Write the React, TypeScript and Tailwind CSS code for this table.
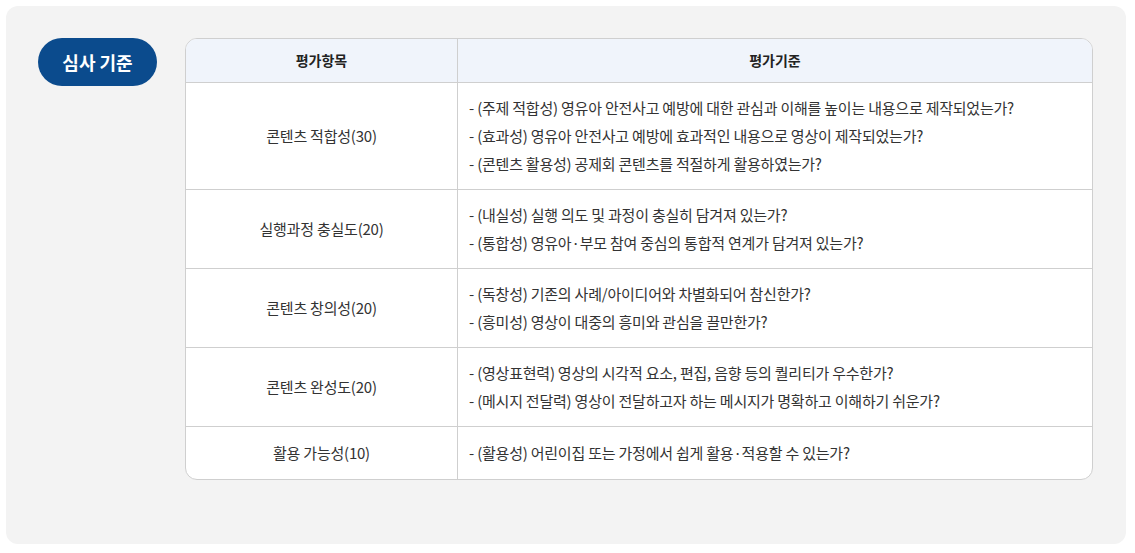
const rows = [
  {
    item: "콘텐츠 적합성(30)",
    criteria: [
      "- (주제 적합성) 영유아 안전사고 예방에 대한 관심과 이해를 높이는 내용으로 제작되었는가?",
      "- (효과성) 영유아 안전사고 예방에 효과적인 내용으로 영상이 제작되었는가?",
      "- (콘텐츠 활용성) 공제회 콘텐츠를 적절하게 활용하였는가?",
    ],
  },
  {
    item: "실행과정 충실도(20)",
    criteria: [
      "- (내실성) 실행 의도 및 과정이 충실히 담겨져 있는가?",
      "- (통합성) 영유아·부모 참여 중심의 통합적 연계가 담겨져 있는가?",
    ],
  },
  {
    item: "콘텐츠 창의성(20)",
    criteria: [
      "- (독창성) 기존의 사례/아이디어와 차별화되어 참신한가?",
      "- (흥미성) 영상이 대중의 흥미와 관심을 끌만한가?",
    ],
  },
  {
    item: "콘텐츠 완성도(20)",
    criteria: [
      "- (영상표현력) 영상의 시각적 요소, 편집, 음향 등의 퀄리티가 우수한가?",
      "- (메시지 전달력) 영상이 전달하고자 하는 메시지가 명확하고 이해하기 쉬운가?",
    ],
  },
  {
    item: "활용 가능성(10)",
    criteria: ["- (활용성) 어린이집 또는 가정에서 쉽게 활용·적용할 수 있는가?"],
  },
];

export default function App() {
  return (
    <div
      className="w-[1135px] h-[553px] bg-white p-[6px]"
      style={{ fontFamily: '"Noto Sans CJK KR", "Noto Sans", sans-serif' }}
    >
      <div className="w-[1120px] h-[538px] bg-[#f3f3f3] rounded-[12px] flex items-start gap-[28px] pl-[32px] pt-[32px]">
        {/* Badge */}
        <div className="w-[119px] h-[48px] rounded-full bg-[#0b4b8d] text-white flex items-center justify-center text-[18px] font-bold shrink-0">
          심사 기준
        </div>

        {/* Criteria table */}
        <div className="w-[908px] bg-white border border-[#cfcfcf] rounded-[12px] overflow-hidden text-[#333] text-[15px] tracking-[-0.22px]">
          <div className="flex h-[44px] bg-[#f0f4fb] border-b border-[#cfcfcf] font-bold text-[#222] text-[14px] tracking-normal">
            <div className="w-[272px] border-r border-[#cfcfcf] flex items-center justify-center">평가항목</div>
            <div className="flex-1 flex items-center justify-center">평가기준</div>
          </div>
          {rows.map((row, i) => (
            <div key={i} className={`flex ${i > 0 ? "border-t border-[#cfcfcf]" : ""}`}>
              <div className="w-[272px] border-r border-[#cfcfcf] flex items-center justify-center">{row.item}</div>
              <div className={`flex-1 pl-[11px] leading-7 ${i === rows.length - 1 ? "py-[12px]" : "py-[11px]"}`}>
                {row.criteria.map((c, j) => (
                  <div key={j}>{c}</div>
                ))}
              </div>
            </div>
          ))}
        </div>
      </div>
    </div>
  );
}
